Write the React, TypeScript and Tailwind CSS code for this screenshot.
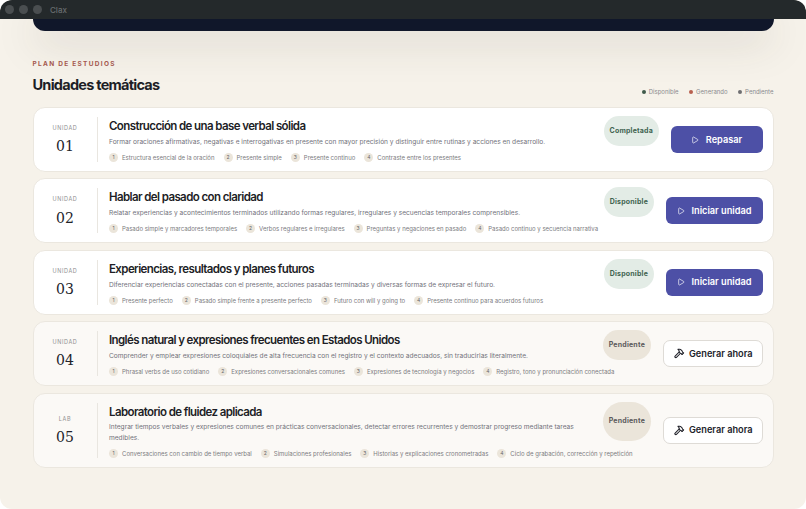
import { Play, Hammer } from "lucide-react"

const sans = "font-['Inter','Liberation_Sans',sans-serif]"

type Unit = {
  label: string
  num: string
  title: string
  desc: string
  topics: string[]
  status: "Completada" | "Disponible" | "Pendiente"
  action: string
  tall?: boolean
}

const units: Unit[] = [
  {
    label: "UNIDAD",
    num: "01",
    title: "Construcción de una base verbal sólida",
    desc: "Formar oraciones afirmativas, negativas e interrogativas en presente con mayor precisión y distinguir entre rutinas y acciones en desarrollo.",
    topics: ["Estructura esencial de la oración", "Presente simple", "Presente continuo", "Contraste entre los presentes"],
    status: "Completada",
    action: "Repasar",
  },
  {
    label: "UNIDAD",
    num: "02",
    title: "Hablar del pasado con claridad",
    desc: "Relatar experiencias y acontecimientos terminados utilizando formas regulares, irregulares y secuencias temporales comprensibles.",
    topics: ["Pasado simple y marcadores temporales", "Verbos regulares e irregulares", "Preguntas y negaciones en pasado", "Pasado continuo y secuencia narrativa"],
    status: "Disponible",
    action: "Iniciar unidad",
  },
  {
    label: "UNIDAD",
    num: "03",
    title: "Experiencias, resultados y planes futuros",
    desc: "Diferenciar experiencias conectadas con el presente, acciones pasadas terminadas y diversas formas de expresar el futuro.",
    topics: ["Presente perfecto", "Pasado simple frente a presente perfecto", "Futuro con will y going to", "Presente continuo para acuerdos futuros"],
    status: "Disponible",
    action: "Iniciar unidad",
  },
  {
    label: "UNIDAD",
    num: "04",
    title: "Inglés natural y expresiones frecuentes en Estados Unidos",
    desc: "Comprender y emplear expresiones coloquiales de alta frecuencia con el registro y el contexto adecuados, sin traducirlas literalmente.",
    topics: ["Phrasal verbs de uso cotidiano", "Expresiones conversacionales comunes", "Expresiones de tecnología y negocios", "Registro, tono y pronunciación conectada"],
    status: "Pendiente",
    action: "Generar ahora",
  },
  {
    label: "LAB",
    num: "05",
    title: "Laboratorio de fluidez aplicada",
    desc: "Integrar tiempos verbales y expresiones comunes en prácticas conversacionales, detectar errores recurrentes y demostrar progreso mediante tareas medibles.",
    topics: ["Conversaciones con cambio de tiempo verbal", "Simulaciones profesionales", "Historias y explicaciones cronometradas", "Ciclo de grabación, corrección y repetición"],
    status: "Pendiente",
    action: "Generar ahora",
    tall: true,
  },
]

function StatusPill({ status, tall }: { status: Unit["status"]; tall?: boolean }) {
  const color = status === "Pendiente" ? "bg-[#ebe5da] text-[#5c5a5c]" : "bg-[#e3ece6] text-[#3f6350]"
  return (
    <span className={`flex ${tall ? "h-[39px]" : "h-[30px]"} shrink-0 items-center rounded-[20px] px-[5.5px] text-[7px] font-bold tracking-[0.2px] ${color}`}>
      {status}
    </span>
  )
}

function ActionButton({ unit }: { unit: Unit }) {
  if (unit.status === "Pendiente") {
    return (
      <button className="flex h-[27px] w-[100px] shrink-0 items-center justify-center gap-[4px] rounded-[7px] border border-[#dedbd6] bg-white pl-[2px] text-[9.2px] font-semibold text-[#22232b]">
        <Hammer className="size-[10.5px]" strokeWidth={2.4} />
        {unit.action}
      </button>
    )
  }
  return (
    <button className={`flex h-[27px] ${unit.status === "Completada" ? "w-[92px]" : "w-[97px]"} shrink-0 items-center justify-center gap-[7px] rounded-[6px] bg-[#4d50a6] text-[9.2px] font-semibold text-white`}>
      <Play className="size-[8px]" strokeWidth={2} />
      {unit.action}
    </button>
  )
}

function UnitCard({ unit }: { unit: Unit }) {
  const pending = unit.status === "Pendiente"
  return (
    <div className={`flex items-stretch rounded-[12px] border border-[#ebe7df] pt-[9px] pb-[9px] pr-[10px] ${pending ? "bg-[#fbf9f6]" : "bg-white"}`}>
      <div className="flex w-[64px] shrink-0 flex-col items-center justify-center border-r border-[#e9e6e0]">
        <span className="text-[5.5px] tracking-[0.6px] text-[#8f8f90]">{unit.label}</span>
        <span className="mt-[5px] font-['DejaVu_Serif',serif] text-[14px] leading-[18px] text-[#22232b] oldstyle-nums">{unit.num}</span>
      </div>
      <div className="min-w-0 flex-1 pl-[11.5px] pr-[10px]">
        <h3 className="text-[11.5px] leading-[18px] font-semibold tracking-[-0.6px] text-[#1d1e26]">{unit.title}</h3>
        <p className="mt-[1.75px] text-[6.6px] leading-[10.5px] text-[#71717a]">{unit.desc}</p>
        <div className="mt-[5.75px] flex items-center gap-[9px]">
          {unit.topics.map((t, i) => (
            <span key={t} className="flex items-center gap-[4px] text-[6px] whitespace-nowrap text-[#7b7b80]">
              <span className="flex size-[9px] items-center justify-center rounded-full bg-[#ebe5da] text-[5px] text-[#66656a]">{i + 1}</span>
              {t}
            </span>
          ))}
        </div>
      </div>
      <div className="flex shrink-0 items-center gap-[12px]">
        <div className="-mt-px self-start"><StatusPill status={unit.status} tall={unit.tall} /></div>
        <ActionButton unit={unit} />
      </div>
    </div>
  )
}

export default function App() {
  return (
    <div className={`${sans} flex h-[509px] w-[806px] flex-col overflow-hidden rounded-[12px] bg-[#f6f2ea]`}>
      <div className="relative z-10 flex h-[19px] shrink-0 items-center gap-[5px] rounded-t-[10px] bg-[#24292b] pl-[5px]">
        <span className="size-[9px] rounded-full bg-[#4a4e50]" />
        <span className="size-[9px] rounded-full bg-[#4a4e50]" />
        <span className="size-[9px] rounded-full bg-[#4a4e50]" />
        <span className="ml-[3px] text-[8px] font-medium text-[#6a6e70]">Clax</span>
      </div>
      <div className="flex flex-1 flex-col px-[32.5px]">
        <div className="h-[12px] shrink-0 rounded-b-[12px] bg-[#10172a] shadow-[0_8px_40px_rgba(60,55,45,0.25)]" />
        <p className="mt-[29px] text-[6.5px] leading-[8px] font-bold tracking-[1.3px] text-[#a4584e]">PLAN DE ESTUDIOS</p>
        <div className="mt-[7px] flex items-end justify-between">
          <h1 className="text-[14.5px] leading-[20px] font-bold tracking-[-0.75px] text-[#1d1e26]">Unidades temáticas</h1>
          <div className="-mb-px flex items-center gap-[10.5px] text-[6px] text-[#8b8b8f]">
            <span className="flex items-center gap-[3px]"><i className="size-[4px] rounded-full bg-[#3f5a4b]" />Disponible</span>
            <span className="flex items-center gap-[3px]"><i className="size-[4px] rounded-full bg-[#b8604f]" />Generando</span>
            <span className="flex items-center gap-[3px]"><i className="size-[4px] rounded-full bg-[#6f6f72]" />Pendiente</span>
          </div>
        </div>
        <div className="mt-[12px] flex flex-col gap-[6.4px]">
          {units.map((u) => (
            <UnitCard key={u.num} unit={u} />
          ))}
        </div>
      </div>
    </div>
  )
}
